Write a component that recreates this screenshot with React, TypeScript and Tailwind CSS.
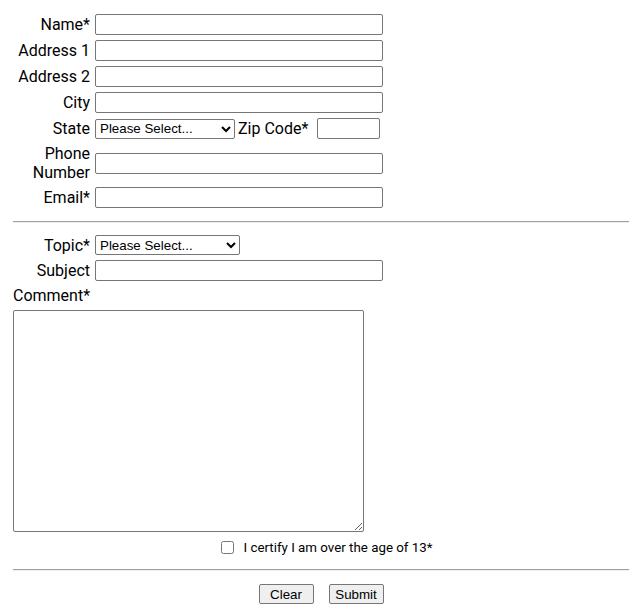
import React from 'react';

const inputCls =
  'h-[21px] w-[288px] border border-[#767676] rounded-[2px] bg-white px-[2px] text-[13.33px] outline-none';
const selectCls =
  'h-[20px] border border-[#767676] rounded-[2px] bg-white pl-0 text-[13.33px] text-black font-["Liberation_Sans",Arial,sans-serif]';

const Row = ({ label, children }: { label: React.ReactNode; children: React.ReactNode }) => (
  <div className="flex items-center">
    <div className="w-[77px] text-right leading-[19px]">{label}</div>
    <div className="ml-[5px] flex items-center">{children}</div>
  </div>
);

const Rule = () => <div className="h-[2px] border-t border-[#a0a0a0] border-b border-b-[#eeeeee]" />;

const App = () => {
  return (
    <div className="min-h-screen bg-white pl-[13px] pr-[5px] text-[16px] text-black font-['Roboto',sans-serif]">
      {/* Contact block */}
      <div className="flex flex-col gap-[5px] pt-[14px]">
        <Row label="Name*">
          <input type="text" className={inputCls} />
        </Row>
        <Row label="Address 1">
          <input type="text" className={inputCls} />
        </Row>
        <Row label="Address 2">
          <input type="text" className={inputCls} />
        </Row>
        <Row label="City">
          <input type="text" className={inputCls} />
        </Row>
        <Row label="State">
          <select className={`${selectCls} w-[140px]`} defaultValue="">
            <option value="">Please Select...</option>
          </select>
          <span className="ml-[3px] leading-[19px]">Zip Code*</span>
          <input type="text" className="ml-[9px] h-[21px] w-[63px] border border-[#767676] rounded-[2px] bg-white outline-none" />
        </Row>
        <Row
          label={
            <>
              Phone
              <br />
              Number
            </>
          }
        >
          <input type="text" className={inputCls} />
        </Row>
        <Row label="Email*">
          <input type="text" className={inputCls} />
        </Row>
      </div>

      <div className="mt-[13px]">
        <Rule />
      </div>

      {/* Message block */}
      <div className="mt-[12px] flex flex-col gap-[5px]">
        <Row label="Topic*">
          <select className={`${selectCls} h-[19px] w-[145px]`} defaultValue="">
            <option value="">Please Select...</option>
          </select>
        </Row>
        <Row label="Subject">
          <input type="text" className={inputCls} />
        </Row>
      </div>
      <div className="mt-[5px] leading-[19px]">Comment*</div>
      <textarea className="mt-[5px] block h-[222px] w-[351px] resize border border-[#767676] rounded-[2px] bg-white outline-none" />

      <label className="mt-[6px] flex items-center justify-center pl-[12px] text-[13.33px]">
        <input type="checkbox" className="m-0 h-[13px] w-[13px]" />
        <span className="ml-[9px]">I certify I am over the age of 13*</span>
      </label>

      <div className="mt-[11px]">
        <Rule />
      </div>

      <div className="mt-[13px] flex justify-center gap-[15px] font-['Liberation_Sans',Arial,sans-serif] text-[13.33px]">
        <button className="h-[20px] w-[55px] border border-[#767676] rounded-[2px] bg-[#efefef]">Clear</button>
        <button className="h-[20px] w-[55px] border border-[#767676] rounded-[2px] bg-[#efefef]">Submit</button>
      </div>
    </div>
  );
};

export default App;
